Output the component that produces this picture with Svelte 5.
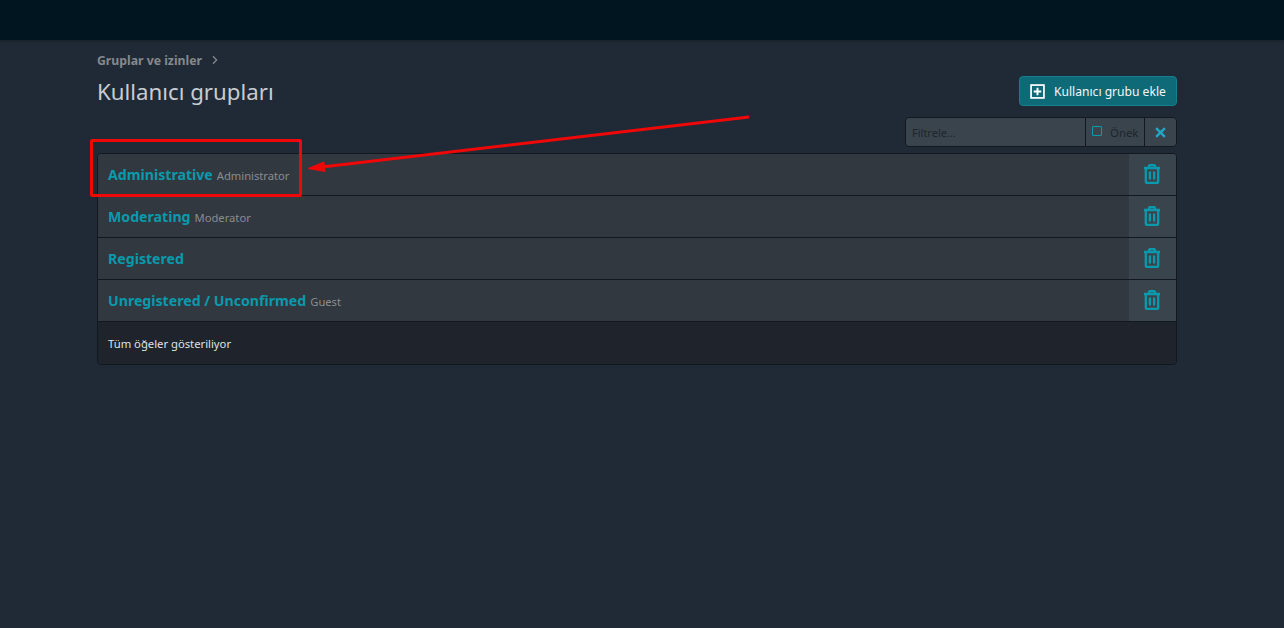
<script lang="ts">
  const groups = [
    { name: 'Administrative', banner: 'Administrator' },
    { name: 'Moderating', banner: 'Moderator' },
    { name: 'Registered', banner: '' },
    { name: 'Unregistered / Unconfirmed', banner: 'Guest' }
  ];
</script>

<div class="page">
  <header class="topbar"></header>

  <main class="body">
    <nav class="breadcrumb">
      <span>Gruplar ve izinler</span>
      <svg viewBox="0 0 10 10" width="10" height="10">
        <path d="M3 1.2l3.6 3.8-3.6 3.8" fill="none" stroke="currentColor" stroke-width="1.3" />
      </svg>
    </nav>

    <div class="title-row">
      <h1>Kullanıcı grupları</h1>
      <button class="add-button">
        <svg viewBox="0 0 14 14" width="15" height="15">
          <rect x="1" y="1" width="12" height="12" fill="none" stroke="#fff" stroke-width="1.6" />
          <path d="M7 3.5v7M3.5 7h7" stroke="#fff" stroke-width="1.8" />
        </svg>
        <span>Kullanıcı grubu ekle</span>
      </button>
    </div>

    <div class="filter-row">
      <div class="filter">
        <input class="filter-input" placeholder="Filtrele..." />
        <label class="prefix">
          <span class="checkbox"></span>
          <span>Önek</span>
        </label>
        <button class="clear" aria-label="Temizle">
          <svg viewBox="0 0 12 12" width="11" height="11">
            <path d="M1.2 1.2l9.6 9.6M10.8 1.2l-9.6 9.6" stroke="#1fa6c8" stroke-width="2.6" />
          </svg>
        </button>
      </div>
    </div>

    <div class="list">
      {#each groups as group}
        <div class="row">
          <div class="row-main">
            <a class="group-name" href="#top">{group.name}</a>
            {#if group.banner}
              <span class="banner">{group.banner}</span>
            {/if}
          </div>
          <button class="delete" aria-label="Sil">
            <svg viewBox="0 0 18 20" width="18" height="20">
              <path
                d="M1 4h16M6 4V2.5C6 1.6 6.6 1 7.5 1h3c.9 0 1.5.6 1.5 1.5V4M2.8 4v13.5c0 .9.6 1.5 1.5 1.5h9.4c.9 0 1.5-.6 1.5-1.5V4M6.9 7.5v8M11.1 7.5v8"
                fill="none"
                stroke="#0a9aad"
                stroke-width="2.3"
              />
            </svg>
          </button>
        </div>
      {/each}
      <div class="list-footer">Tüm öğeler gösteriliyor</div>
    </div>
  </main>

  <div class="note-box"></div>
  <svg class="note-arrow" viewBox="0 0 1284 628" width="1284" height="628">
    <path d="M749 117L322 167" stroke="#f00808" stroke-width="3" fill="none" />
    <path d="M308 168.5L324 162L325 171.5Z" fill="#f00808" stroke="#f00808" />
  </svg>
</div>

<style>
  :global(body) {
    margin: 0;
    background: #202a37;
  }

  .page {
    position: relative;
    height: 628px;
    overflow: hidden;
    background: #202a37;
    font-family: "Noto Sans", "Open Sans", sans-serif;
  }

  .topbar {
    height: 40px;
    background: #00151f;
    box-shadow: 0 1px 3px rgba(0, 0, 0, 0.3);
  }

  .body {
    width: 1080px;
    margin-left: 97px;
    box-sizing: border-box;
  }

  .breadcrumb {
    display: flex;
    align-items: center;
    gap: 8px;
    height: 20px;
    margin-top: 10px;
    font-size: 12.25px;
    font-weight: 700;
    color: #85888c;
  }

  .title-row {
    display: flex;
    justify-content: space-between;
    align-items: flex-start;
    height: 41px;
    margin-top: 6px;
  }

  h1 {
    margin: 0;
    font-size: 22.25px;
    font-weight: 400;
    line-height: 31px;
    color: #c8ccd0;
  }

  .add-button {
    display: flex;
    align-items: center;
    gap: 9px;
    width: 158px;
    height: 30px;
    padding: 0 0 0 10px;
    box-sizing: border-box;
    background: #0f6a78;
    border: 1px solid #137f8f;
    border-radius: 4px;
    color: #f2f6f7;
    font-family: inherit;
    font-size: 12.1px;
  }

  .filter-row {
    display: flex;
    justify-content: flex-end;
    margin-bottom: 6px;
  }

  .filter {
    display: flex;
    width: 272px;
    height: 30px;
    box-sizing: border-box;
    background: #3a444d;
    border: 1px solid #13181e;
    border-radius: 4px;
    overflow: hidden;
  }

  .filter-input {
    width: 179px;
    padding: 0 6px;
    box-sizing: border-box;
    background: transparent;
    border: 0;
    outline: none;
    font-family: inherit;
    font-size: 11px;
    color: #e0e0e0;
  }

  .filter-input::placeholder {
    color: #1d242b;
    opacity: 1;
  }

  .prefix {
    display: flex;
    align-items: center;
    gap: 8px;
    width: 60px;
    padding-left: 6px;
    box-sizing: border-box;
    border-left: 1px solid #13181e;
    border-right: 1px solid #13181e;
    font-size: 11.4px;
    color: #1d242b;
  }

  .checkbox {
    flex: none;
    width: 8px;
    height: 8px;
    border: 1.5px solid #0a9aad;
    border-radius: 1px;
    margin-top: -2px;
  }

  .clear {
    flex: 1;
    display: flex;
    align-items: center;
    justify-content: center;
    padding: 0;
    background: transparent;
    border: 0;
  }

  .list {
    border: 1px solid #13181e;
    border-radius: 4px;
    overflow: hidden;
  }

  .row {
    display: flex;
    height: 42px;
    box-sizing: border-box;
    background: #31383f;
    border-bottom: 1px solid #13181e;
  }

  .row-main {
    flex: 1;
    display: flex;
    align-items: center;
    gap: 4px;
    padding-left: 10px;
  }

  .group-name {
    font-size: 14.15px;
    font-weight: 700;
    color: #0a9aad;
    text-decoration: none;
  }

  .banner {
    margin-top: 2px;
    font-size: 11.2px;
    color: #8a8d91;
  }

  .delete {
    display: flex;
    align-items: center;
    justify-content: center;
    width: 47px;
    padding: 0 1px 2px 0;
    background: #3a444d;
    border: 0;
  }

  .list-footer {
    display: flex;
    align-items: center;
    height: 42px;
    padding-left: 10px;
    background: #1f242c;
    font-size: 11.25px;
    color: #dfe2e5;
  }

  .note-box {
    position: absolute;
    left: 90px;
    top: 139px;
    width: 212px;
    height: 58px;
    box-sizing: border-box;
    border: 3px solid #f00808;
    border-radius: 2px;
  }

  .note-arrow {
    position: absolute;
    left: 0;
    top: 0;
    pointer-events: none;
  }
</style>
